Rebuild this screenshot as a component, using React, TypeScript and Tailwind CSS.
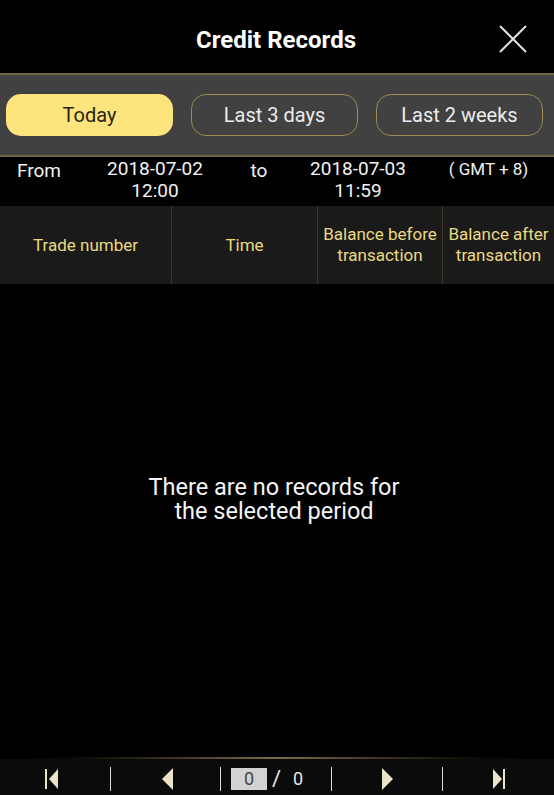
export default function App() {
  const tabs = ['Today', 'Last 3 days', 'Last 2 weeks'];
  const cols = [
    { label: 'Trade number', w: 'w-[171px]' },
    { label: 'Time', w: 'w-[146px]' },
    { label: 'Balance before transaction', w: 'w-[125px]' },
    { label: 'Balance after transaction', w: 'flex-1' },
  ];

  return (
    <div
      className="w-[554px] h-[795px] bg-black text-white flex flex-col overflow-hidden"
      style={{ fontFamily: 'Roboto, "Liberation Sans", sans-serif' }}
    >
      {/* Header */}
      <div className="relative h-[73px] flex items-center justify-center pt-[6px]">
        <h1 className="text-[24px] font-bold pr-[2px]">Credit Records</h1>
        <svg className="absolute left-[498px] top-[24px]" width="30" height="30" viewBox="0 0 30 30">
          <path d="M2 2 L28 28 M28 2 L2 28" stroke="#e0e0e0" strokeWidth="2" />
        </svg>
      </div>

      {/* Period tabs */}
      <div className="h-[84px] bg-[#414141] border-y-2 border-[#6e6549] flex items-center gap-[18px] pl-[6px]">
        {tabs.map((t, i) => (
          <button
            key={t}
            className={
              i === 0
                ? 'w-[167px] h-[42px] rounded-[15px] bg-[#fde47c] text-[#2a2312] text-[20px]'
                : 'w-[167px] h-[42px] rounded-[15px] border border-[#9a8a55] text-[#ececec] text-[20px]'
            }
          >
            {t}
          </button>
        ))}
      </div>

      {/* Date range */}
      <div className="h-[49px] flex text-[19px] leading-[22px] pt-[1px] text-[#f2f2f2]">
        <div className="w-[85px] pl-[17px] pt-[2px]">From</div>
        <div className="w-[140px] text-center">
          2018-07-02
          <br />
          12:00
        </div>
        <div className="w-[68px] text-center pt-[2px]">to</div>
        <div className="w-[130px] text-center">
          2018-07-03
          <br />
          11:59
        </div>
        <div className="flex-1 text-center text-[17px]">( GMT + 8)</div>
      </div>

      {/* Table header */}
      <div className="h-[78px] bg-[#1a1a1a] flex">
        {cols.map((c, i) => (
          <div
            key={c.label}
            className={`${c.w} flex items-center justify-center text-center text-[17px] leading-[21px] text-[#ead97f] ${
              i > 0 ? 'border-l border-[#3c3826]' : ''
            }`}
          >
            {c.label === 'Balance before transaction' ? (
              <span>
                Balance before
                <br />
                transaction
              </span>
            ) : c.label === 'Balance after transaction' ? (
              <span>
                Balance after
                <br />
                transaction
              </span>
            ) : (
              c.label
            )}
          </div>
        ))}
      </div>

      {/* Body */}
      <div className="flex-1 flex items-center justify-center pb-[43px]">
        <p className="text-[23.5px] leading-[24px] text-center text-[#f4f4f4] pr-[6px]">
          There are no records for
          <br />
          the selected period
        </p>
      </div>

      {/* Pager */}
      <div className="h-[2px] bg-gradient-to-r from-black via-[#7a6c4c] to-black" />
      <div className="h-[36px] bg-[#0b0b0b] flex items-center pt-[4px]">
        <div className="w-[110px] flex justify-center pr-[6px]">
          <svg width="14" height="20" viewBox="0 0 14 20">
            <rect x="0" y="0" width="2" height="20" fill="#ebe4cb" />
            <path d="M13 0 L4 10 L13 20 Z" fill="#ebe4cb" />
          </svg>
        </div>
        <div className="w-px h-[24px] bg-[#dedede]" />
        <div className="w-[109px] flex justify-center pl-[4px]">
          <svg width="11" height="22" viewBox="0 0 11 22">
            <path d="M11 0 L0 11 L11 22 Z" fill="#ebe4cb" />
          </svg>
        </div>
        <div className="w-px h-[24px] bg-[#dedede]" />
        <div className="w-[110px] flex items-center pl-[10px] text-[18px]">
          <div className="w-[36px] h-[22px] bg-[#d2d2d2] text-[#444] flex items-center justify-center leading-none">
            0
          </div>
          <span className="ml-[5px] text-[#e8e8e8] text-[22px] leading-none">/</span>
          <span className="ml-[12px] text-[#e8e8e8] leading-none">0</span>
        </div>
        <div className="w-px h-[24px] bg-[#dedede]" />
        <div className="w-[110px] flex justify-center">
          <svg width="11" height="22" viewBox="0 0 11 22">
            <path d="M0 0 L11 11 L0 22 Z" fill="#ebe4cb" />
          </svg>
        </div>
        <div className="w-px h-[24px] bg-[#dedede]" />
        <div className="flex-1 flex justify-center">
          <svg width="14" height="20" viewBox="0 0 14 20">
            <path d="M1 0 L10 10 L1 20 Z" fill="#ebe4cb" />
            <rect x="11" y="0" width="2" height="20" fill="#ebe4cb" />
          </svg>
        </div>
      </div>
    </div>
  );
}
